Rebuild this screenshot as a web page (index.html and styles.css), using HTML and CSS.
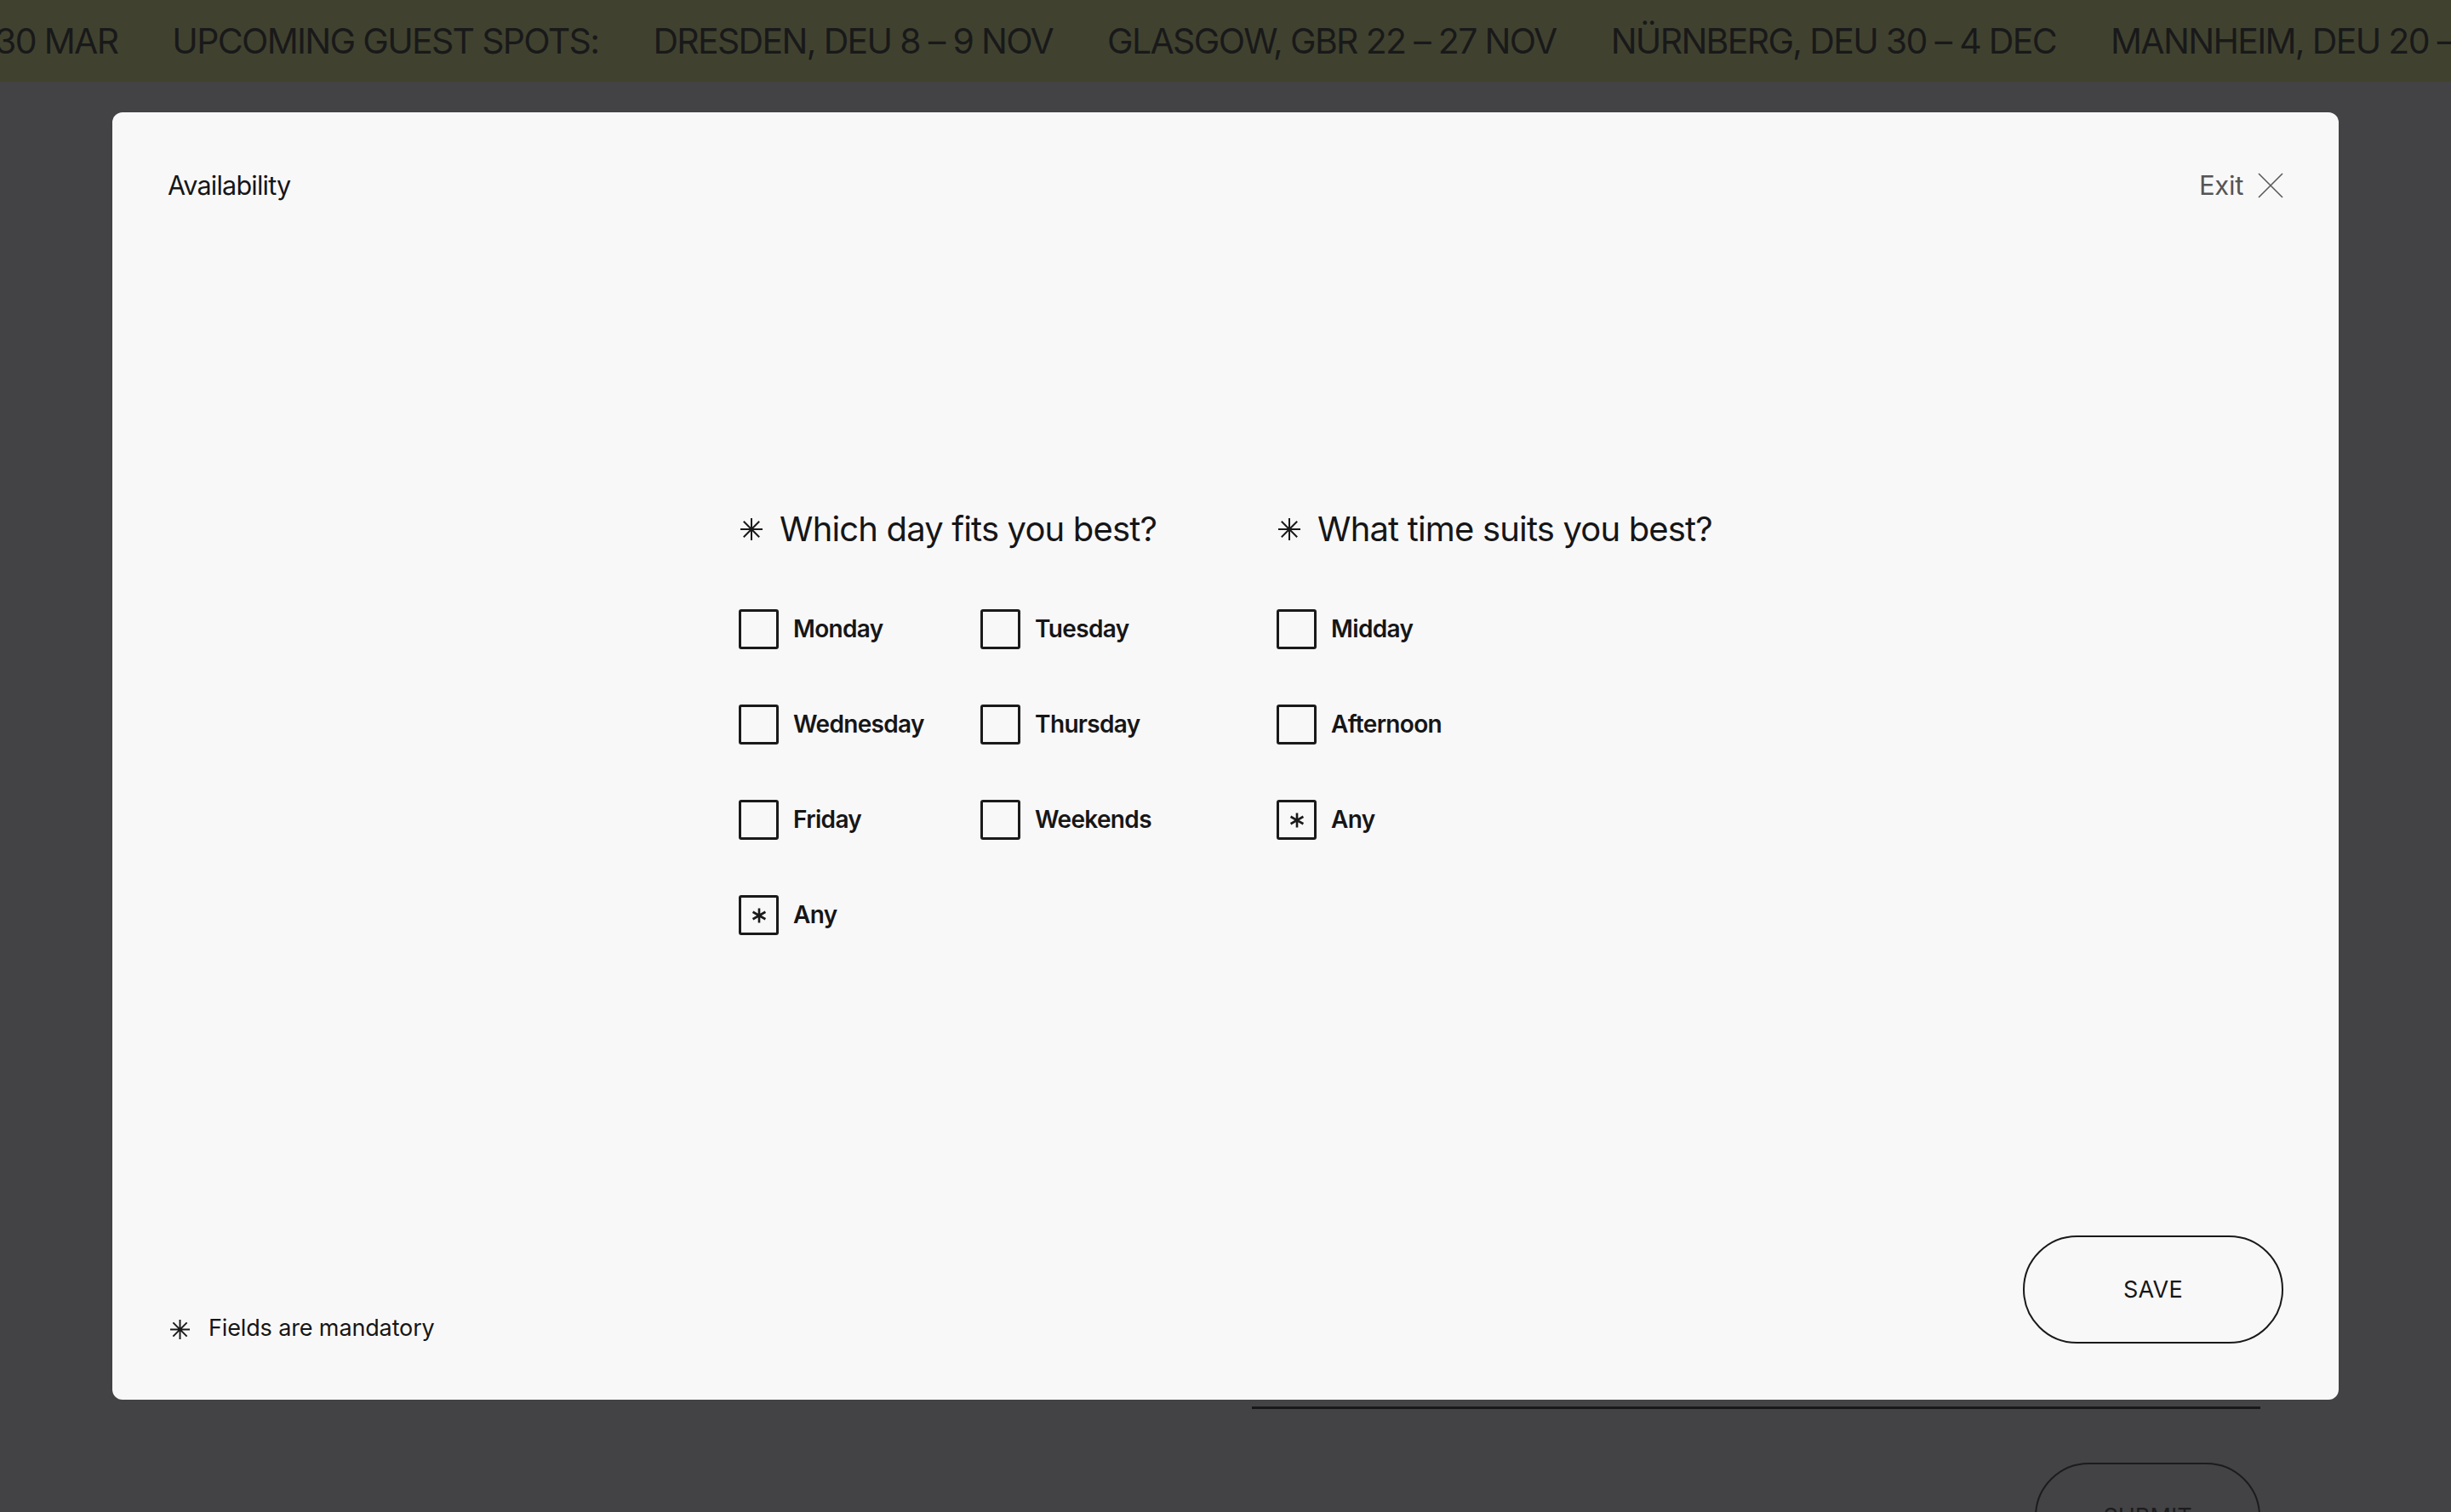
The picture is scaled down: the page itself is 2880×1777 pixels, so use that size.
FILE: index.html
```html
<!DOCTYPE html>
<html lang="en">
<head>
<meta charset="utf-8">
<title>Availability</title>
<link rel="stylesheet" href="styles.css">
</head>
<body>
<div class="ticker">
  <div class="ticker-track">
    <span class="ticker-item">30 MAR</span>
    <span class="ticker-item">UPCOMING GUEST SPOTS:</span>
    <span class="ticker-item">DRESDEN, DEU 8 – 9 NOV</span>
    <span class="ticker-item">GLASGOW, GBR 22 – 27 NOV</span>
    <span class="ticker-item">NÜRNBERG, DEU 30 – 4 DEC</span>
    <span class="ticker-item">MANNHEIM, DEU 20 – 23 DEC</span>
  </div>
</div>

<main class="page">
  <div class="page-form">
    <div class="page-input"></div>
    <div class="page-actions">
      <button class="page-submit" type="button">SUBMIT</button>
    </div>
  </div>
</main>

<div class="overlay">
  <section class="modal">
    <header class="modal-head">
      <h1 class="modal-title">Availability</h1>
      <button class="exit" type="button">
        <span>Exit</span>
        <svg class="exit-icon" width="30" height="30" viewBox="0 0 30 30"><path d="M1 1 L29 29 M29 1 L1 29" stroke="#5a5a5a" stroke-width="1.6" fill="none"/></svg>
      </button>
    </header>

    <div class="modal-body">
      <div class="groups">
        <div class="group">
          <h2 class="question">
            <svg class="star" width="26" height="26" viewBox="0 0 26 26"><path d="M13 0 V26 M0 13 H26 M3.8 3.8 L22.2 22.2 M22.2 3.8 L3.8 22.2" stroke="#1a1a1a" stroke-width="2" fill="none"/></svg>
            <span>Which day fits you best?</span>
          </h2>
          <div class="options options-days">
            <label class="option"><span class="box"></span><span class="opt-label">Monday</span></label>
            <label class="option"><span class="box"></span><span class="opt-label">Tuesday</span></label>
            <label class="option"><span class="box"></span><span class="opt-label">Wednesday</span></label>
            <label class="option"><span class="box"></span><span class="opt-label">Thursday</span></label>
            <label class="option"><span class="box"></span><span class="opt-label">Friday</span></label>
            <label class="option"><span class="box"></span><span class="opt-label">Weekends</span></label>
            <label class="option"><span class="box checked"><svg width="20" height="20" viewBox="0 0 20 20"><path d="M10 1.5 V18.5 M2.6 5.75 L17.4 14.25 M17.4 5.75 L2.6 14.25" stroke="#1a1a1a" stroke-width="2.6" fill="none"/></svg></span><span class="opt-label">Any</span></label>
          </div>
        </div>

        <div class="group">
          <h2 class="question">
            <svg class="star" width="26" height="26" viewBox="0 0 26 26"><path d="M13 0 V26 M0 13 H26 M3.8 3.8 L22.2 22.2 M22.2 3.8 L3.8 22.2" stroke="#1a1a1a" stroke-width="2" fill="none"/></svg>
            <span>What time suits you best?</span>
          </h2>
          <div class="options options-times">
            <label class="option"><span class="box"></span><span class="opt-label">Midday</span></label>
            <label class="option"><span class="box"></span><span class="opt-label">Afternoon</span></label>
            <label class="option"><span class="box checked"><svg width="20" height="20" viewBox="0 0 20 20"><path d="M10 1.5 V18.5 M2.6 5.75 L17.4 14.25 M17.4 5.75 L2.6 14.25" stroke="#1a1a1a" stroke-width="2.6" fill="none"/></svg></span><span class="opt-label">Any</span></label>
          </div>
        </div>
      </div>
    </div>

    <footer class="modal-foot">
      <p class="note">
        <svg class="star-small" width="23" height="23" viewBox="0 0 26 26"><path d="M13 0 V26 M0 13 H26 M3.8 3.8 L22.2 22.2 M22.2 3.8 L3.8 22.2" stroke="#1a1a1a" stroke-width="2.2" fill="none"/></svg>
        <span>Fields are mandatory</span>
      </p>
      <button class="save" type="button">SAVE</button>
    </footer>
  </section>
</div>
</body>
</html>
```

FILE: styles.css
```css
* { box-sizing: border-box; }

html, body {
  margin: 0;
  padding: 0;
}

body {
  width: 2880px;
  height: 1777px;
  overflow: hidden;
  background: #434345;
  font-family: Inter, "Liberation Sans", sans-serif;
  color: #1a1a1a;
  position: relative;
}

/* ticker */
.ticker {
  height: 96px;
  background: #40422f;
  display: flex;
  align-items: center;
  overflow: hidden;
  white-space: nowrap;
}

.ticker-track {
  display: flex;
  gap: 64px;
  margin-left: -6px;
}

.ticker-item {
  font-size: 41px;
  letter-spacing: -0.041em;
  line-height: 1;
  color: #19191a;
}

/* page behind overlay */
.page {
  display: flex;
  justify-content: flex-end;
  padding: 0 224px 0 0;
}

.page-form {
  width: 1185px;
  padding-top: 1557px;
}

.page-input {
  border-bottom: 3px solid #18181a;
}

.page-actions {
  display: flex;
  justify-content: flex-end;
  margin-top: 63px;
}

.page-submit {
  width: 265px;
  height: 127px;
  border: 2px solid #1c1c1d;
  border-radius: 999px;
  background: transparent;
  font-family: Inter, "Liberation Sans", sans-serif;
  font-size: 27px;
  color: #1c1c1d;
}

/* overlay + modal */
.overlay {
  position: absolute;
  inset: 0;
  padding: 132px;
  display: flex;
}

.modal {
  flex: 1;
  background: #f9f8f9;
  border-radius: 12px;
  padding: 65px;
  display: flex;
  flex-direction: column;
}

.modal-head {
  display: flex;
  justify-content: space-between;
  align-items: center;
}

.modal-title {
  margin: 0;
  font-size: 30.5px;
  font-weight: 400;
  line-height: 41px;
  letter-spacing: -0.025em;
  color: #161617;
}

.exit {
  display: flex;
  align-items: center;
  gap: 17px;
  background: none;
  border: 0;
  padding: 0;
  font-family: Inter, "Liberation Sans", sans-serif;
  font-size: 31px;
  letter-spacing: -0.01em;
  line-height: 41px;
  color: #555556;
}

.exit-icon { display: block; }

.modal-body {
  flex: 1;
  display: flex;
  align-items: center;
  justify-content: center;
  padding-top: 6px;
}

.groups {
  display: flex;
  gap: 141px;
  align-items: flex-start;
}

.question {
  margin: 0 0 70px 2px;
  display: flex;
  align-items: center;
  gap: 20px;
  font-size: 40px;
  font-weight: 400;
  line-height: 48px;
  letter-spacing: -0.021em;
  color: #161617;
}

.star { display: block; flex: none; }

.options {
  display: grid;
  gap: 65px 60px;
}

.options-days { grid-template-columns: auto auto; }
.options-times { grid-template-columns: auto; }

.option {
  display: flex;
  align-items: center;
  gap: 17px;
}

.box {
  width: 47px;
  height: 47px;
  border: 3px solid #1a1a1a;
  border-radius: 3px;
  display: flex;
  align-items: center;
  justify-content: center;
  flex: none;
}

.box svg { display: block; margin-top: 2px; }

.opt-label {
  font-size: 28px;
  font-weight: 600;
  letter-spacing: -0.024em;
  line-height: 34px;
  color: #161617;
}

.modal-foot {
  display: flex;
  justify-content: space-between;
  align-items: flex-end;
}

.note {
  margin: 0;
  display: flex;
  align-items: center;
  gap: 22px;
  font-size: 27px;
  line-height: 42px;
  letter-spacing: -0.005em;
  color: #161617;
  padding-left: 3px;
  transform: translateY(2px);
}

.star-small { display: block; margin-top: 2px; }

.save {
  width: 306px;
  height: 127px;
  border: 2px solid #1a1a1a;
  border-radius: 999px;
  background: transparent;
  font-family: Inter, "Liberation Sans", sans-serif;
  font-size: 27px;
  color: #161617;
  letter-spacing: 0.01em;
  margin-bottom: 1px;
}
```
